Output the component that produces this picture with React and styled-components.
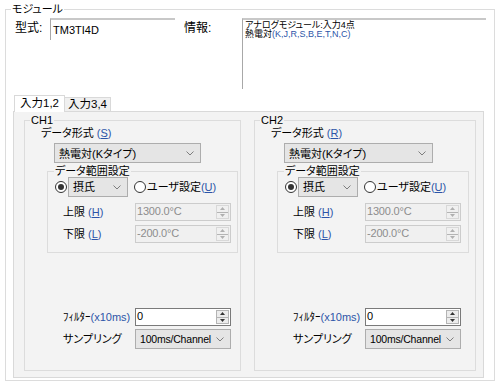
import React from 'react'
import styled, {createGlobalStyle} from 'styled-components'

const GlobalStyle = createGlobalStyle`
  html, body {
    margin: 0;
    padding: 0;
    background: #fff;
  }
  body {
    font-family: "Liberation Sans", "Noto Sans CJK JP", sans-serif;
    font-size: 11px;
    font-feature-settings: "palt";
    color: #000;
  }
  * {
    box-sizing: border-box;
  }
`

const Frame = styled.div`
  width: 500px;
  height: 383px;
  overflow: hidden;
  padding: 3px 5px 0 5px;
`

const Group = styled.fieldset`
  margin: 0;
  padding: 0;
  min-width: 0;
  border: 1px solid ${p => p.$line || '#dcdcdc'};
  width: ${p => p.$w || 'auto'};
  height: ${p => p.$h || 'auto'};
  display: flex;
  flex-direction: column;
`

const Caption = styled.legend`
  margin-left: ${p => p.$indent || '5px'};
  padding: 0 1px;
  line-height: 13px;
  font-size: 11px;
`

const ModuleRow = styled.div`
  display: grid;
  grid-template-columns: 44px 125px 67px 244px;
  margin-top: 2px;
  height: 71px;
`

const FieldLabel = styled.div`
  padding: 3px 0 0 9px;
  font-size: 12px;
  line-height: 14px;
`

const ModelBox = styled.div`
  height: 22px;
  border-top: 2px solid #c8c8c8;
  border-left: 1px solid #a8a8a8;
  padding: 4px 0 0 2px;
  font-size: 11px;
  line-height: 12px;
`

const InfoBox = styled.div`
  height: 71px;
  border-top: 2px solid #c8c8c8;
  border-left: 1px solid #a8a8a8;
  padding: 1px 0 0 2px;
  font-size: 9px;
  line-height: 9px;
`

const Blue = styled.span`
  color: #2d55a8;
`

const TabArea = styled.div`
  margin: 6px 0 0 7px;
  width: 471px;
`

const TabStrip = styled.div`
  display: flex;
  align-items: flex-end;
  height: 16px;
  padding-left: 1px;
`

const Tab = styled.div`
  position: relative;
  z-index: ${p => (p.$active ? 1 : 0)};
  height: ${p => (p.$active ? '17px' : '14px')};
  margin-bottom: ${p => (p.$active ? '-1px' : '0')};
  padding: ${p => (p.$active ? '1px 5px 0 5px' : '0 3px 0 3px')};
  border: 1px solid #d9d9d9;
  border-bottom: none;
  border-left: ${p => (p.$active ? '1px solid #d9d9d9' : 'none')};
  background: ${p => (p.$active ? '#fff' : '#f0f0f0')};
  font-size: 11.5px;
  line-height: 13px;
  white-space: nowrap;
`

const TabPage = styled.div`
  height: 267px;
  border: 1px solid #d9d9d9;
  background: #f3f3f3;
  padding: 2px 0 0 10px;
  display: grid;
  grid-template-columns: 217px 222px;
  column-gap: 13px;
  align-items: start;
`

const Line = styled.div`
  display: flex;
  align-items: center;
  margin: ${p => p.$m || '0'};
  height: ${p => p.$h || '13px'};
  line-height: 13px;
  white-space: nowrap;
`

const LabelCell = styled.span`
  width: ${p => p.$w || '72px'};
  flex: none;
`

const Combo = styled.div`
  display: flex;
  align-items: center;
  justify-content: space-between;
  width: ${p => p.$w};
  height: ${p => p.$h || '20px'};
  flex: none;
  margin: ${p => p.$m || '0'};
  padding: 0 6px 0 4px;
  background: #e5e5e5;
  border: 1px solid #adadad;
  white-space: nowrap;
  font-size: ${p => p.$fs || '11px'};
  letter-spacing: ${p => p.$ls || '0'};
`

const Radio = styled.span`
  width: 12px;
  height: 12px;
  flex: none;
  border-radius: 50%;
  border: 1px solid #333;
  background: #fff;
  display: inline-flex;
  align-items: center;
  justify-content: center;
  margin: ${p => p.$m || '0'};

  &::after {
    content: '';
    display: ${p => (p.$on ? 'block' : 'none')};
    width: 6px;
    height: 6px;
    border-radius: 50%;
    background: #333;
  }
`

const Spin = styled.div`
  display: flex;
  width: 96px;
  height: 18px;
  flex: none;
  border: 1px solid ${p => (p.$off ? '#cccccc' : '#7a7a7a')};
  background: ${p => (p.$off ? '#f0f0f0' : '#fff')};
`

const SpinText = styled.div`
  flex: 1;
  padding-left: 1px;
  line-height: 15px;
  letter-spacing: -0.2px;
  color: ${p => (p.$off ? '#8d8d8d' : '#000')};
`

const SpinButtons = styled.div`
  width: 13px;
  margin: 1px 1px 1px 0;
  display: flex;
  flex-direction: column;
  border: 1px solid ${p => (p.$off ? '#d8d8d8' : '#b4b4b4')};
  background: ${p => (p.$off ? '#f0f0f0' : '#ececec')};
`

const SpinHalf = styled.div`
  flex: 1;
  display: flex;
  align-items: center;
  justify-content: center;
  & + & {
    border-top: 1px solid ${p => (p.$off ? '#d8d8d8' : '#b4b4b4')};
  }
`

const Key = ({ch}) => (
  <Blue>(<u>{ch}</u>)</Blue>
)

const Chevron = () => (
  <svg width="8" height="5" viewBox="0 0 8 5">
    <polyline points="0.5,0.5 4,4 7.5,0.5" fill="none" stroke="#7d7d7d" strokeWidth="1"/>
  </svg>
)

const Arrow = ({up, off}) => (
  <svg width="5" height="3" viewBox="0 0 5 3">
    <polygon points={up ? '0,3 2.5,0 5,3' : '0,0 2.5,3 5,0'} fill={off ? '#b0b0b0' : '#333'}/>
  </svg>
)

const SpinBox = ({value, off}) => (
  <Spin $off={off}>
    <SpinText $off={off}>{value}</SpinText>
    <SpinButtons $off={off}>
      <SpinHalf $off={off}><Arrow up off={off}/></SpinHalf>
      <SpinHalf $off={off}><Arrow off={off}/></SpinHalf>
    </SpinButtons>
  </Spin>
)

const Channel = ({name, keyChar, width, comboWidth, rangeWidth}) => (
  <Group $w={width} $h="257px">
    <Caption>{name}</Caption>
    <Line $m="0 0 0 16px">データ形式&nbsp;<Key ch={keyChar}/></Line>
    <Combo $w={comboWidth} $m="3px 0 0 29px">
      <span>熱電対(Kタイプ)</span>
      <Chevron/>
    </Combo>
    <Group $w={rangeWidth} $h="88px" style={{marginTop: 2, marginLeft: 22}}>
      <Caption $indent="6px">データ範囲設定</Caption>
      <Line $h="20px" $m="-1px 0 0 0">
        <Radio $on $m="0 1px 0 7px"/>
        <Combo $w="60px">
          <span>摂氏</span>
          <Chevron/>
        </Combo>
        <Radio $m="0 1px 0 6px"/>
        <span>ユーザ設定<Key ch="U"/></span>
      </Line>
      <Line $h="18px" $m="6px 0 0 15px">
        <LabelCell>上限&nbsp;<Key ch="H"/></LabelCell>
        <SpinBox value="1300.0°C" off/>
      </Line>
      <Line $h="18px" $m="4px 0 0 15px">
        <LabelCell>下限&nbsp;<Key ch="L"/></LabelCell>
        <SpinBox value="-200.0°C" off/>
      </Line>
    </Group>
    <Line $h="18px" $m="55px 0 0 38px">
      <LabelCell>ﾌｨﾙﾀｰ<Blue>(x10ms)</Blue></LabelCell>
      <SpinBox value="0"/>
    </Line>
    <Line $h="20px" $m="3px 0 0 38px">
      <LabelCell>サンプリング</LabelCell>
      <Combo $w="96px" $fs="10.5px" $ls="-0.2px">
        <span>100ms/Channel</span>
        <Chevron/>
      </Combo>
    </Line>
  </Group>
)

export default function App() {
  return (
    <>
      <GlobalStyle/>
      <Frame>
        <Group $w="490px" $h="378px">
          <Caption>モジュール</Caption>
          <ModuleRow>
            <FieldLabel>型式:</FieldLabel>
            <ModelBox>TM3TI4D</ModelBox>
            <FieldLabel>情報:</FieldLabel>
            <InfoBox>
              アナログモジュール:入力4点<br/>
              熱電対<Blue>(K,J,R,S,B,E,T,N,C)</Blue>
            </InfoBox>
          </ModuleRow>
          <TabArea>
            <TabStrip>
              <Tab $active>入力1,2</Tab>
              <Tab>入力3,4</Tab>
            </TabStrip>
            <TabPage>
              <Channel name="CH1" keyChar="S" width="217px" comboWidth="147px" rangeWidth="191px"/>
              <Channel name="CH2" keyChar="R" width="222px" comboWidth="149px" rangeWidth="192px"/>
            </TabPage>
          </TabArea>
        </Group>
      </Frame>
    </>
  )
}
